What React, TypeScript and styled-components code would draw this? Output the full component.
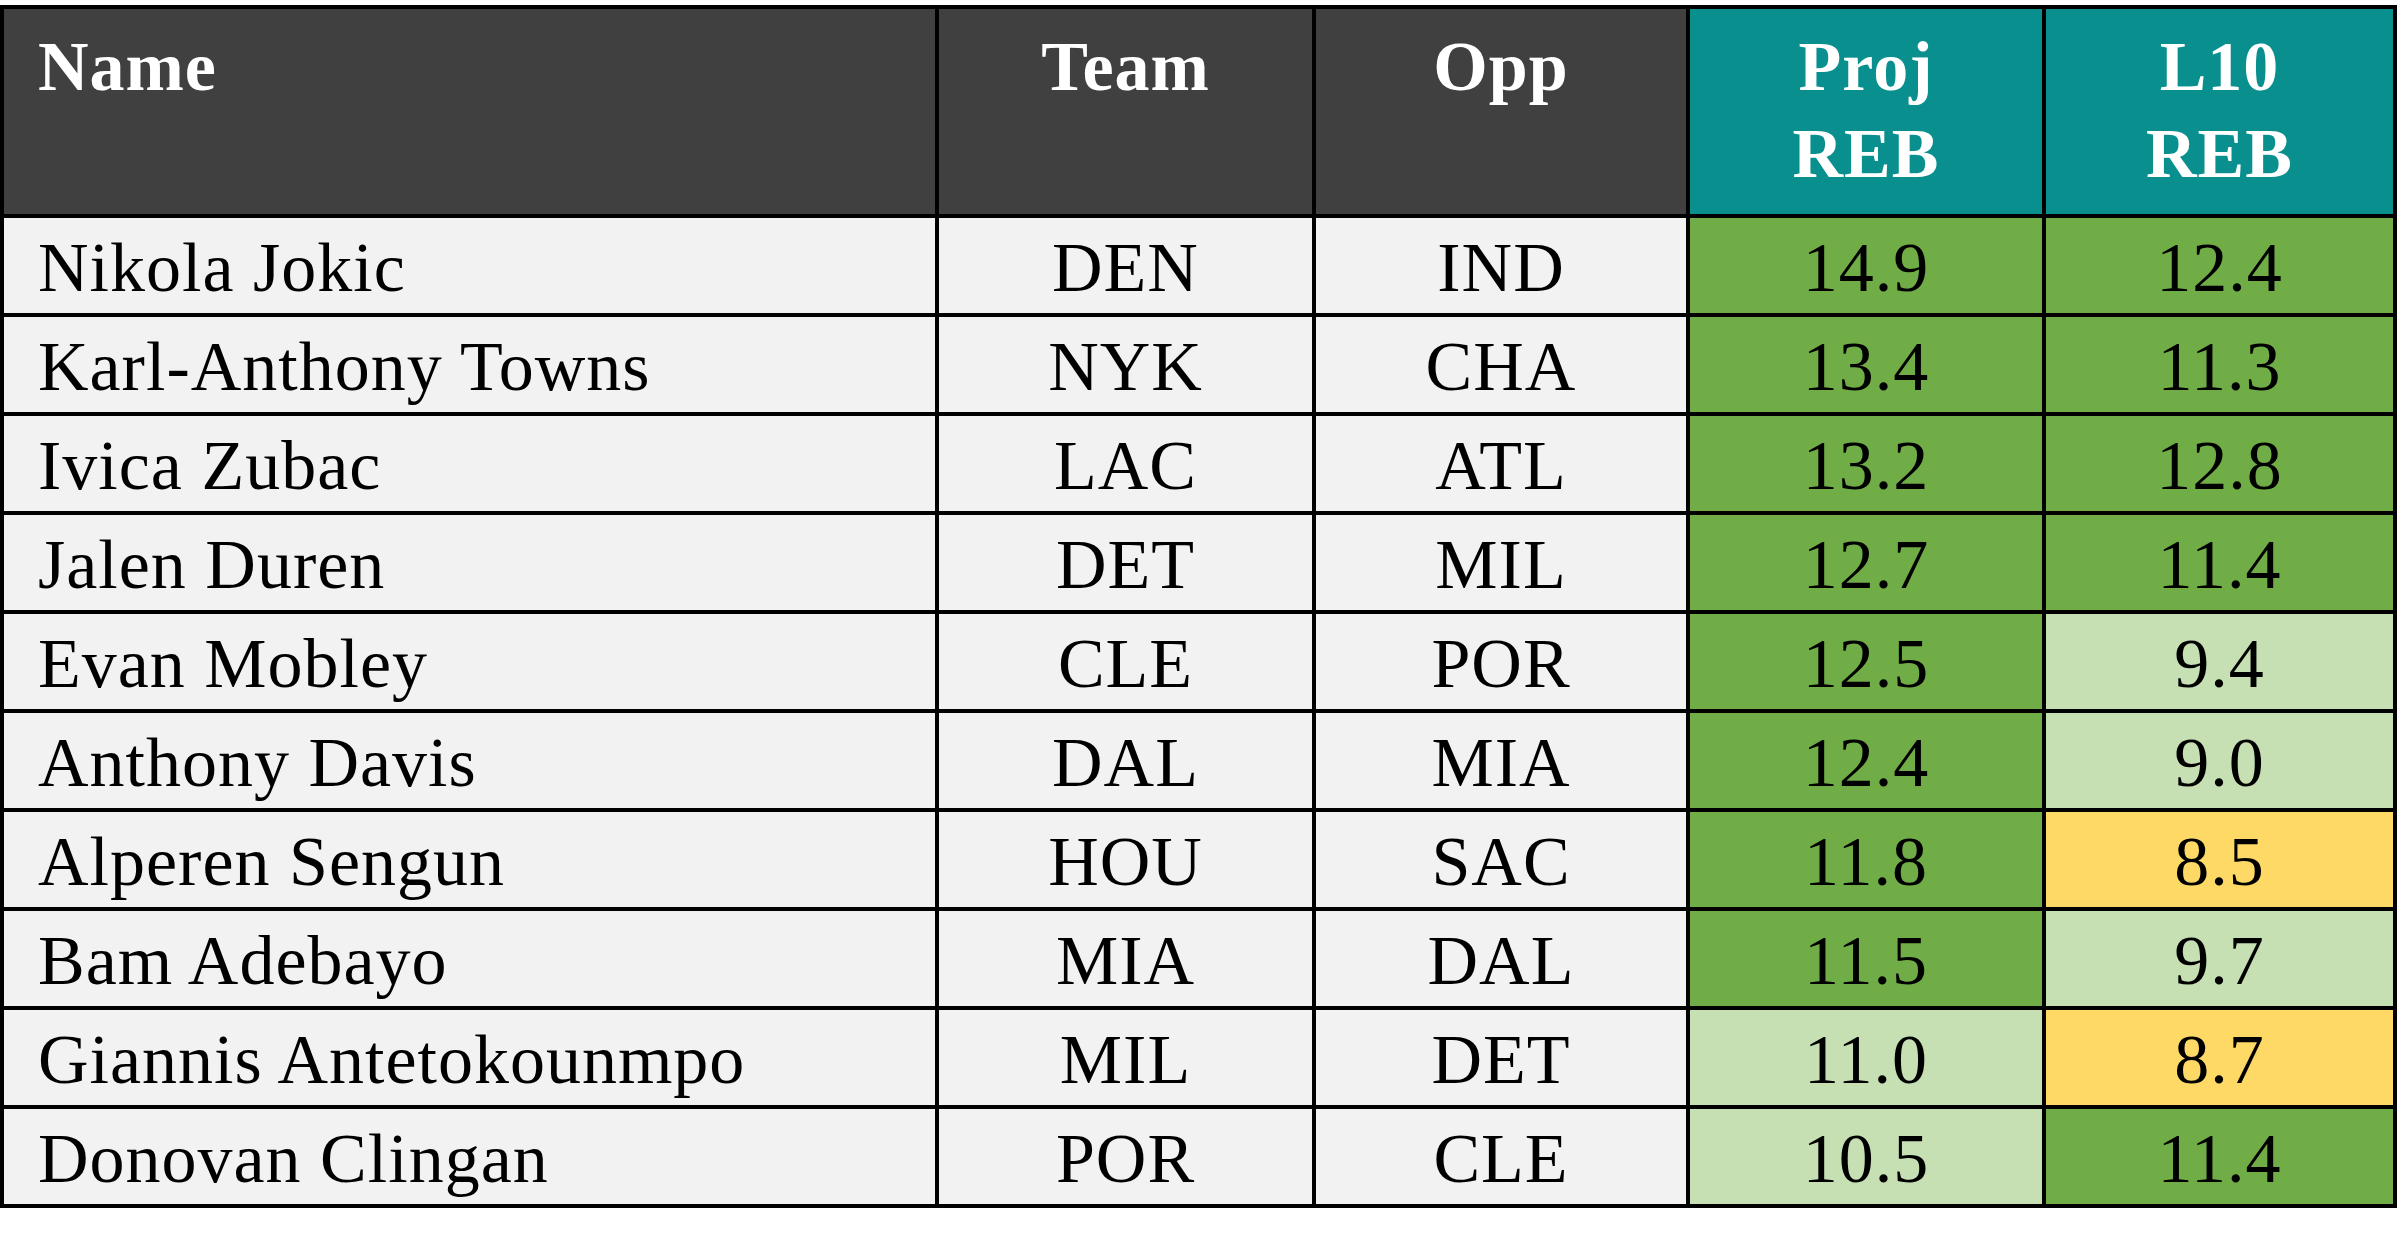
import React from 'react';
import styled, { createGlobalStyle, css } from 'styled-components';

const DARK = '#404040';
const TEAL = '#0a8f8f';
const STRONG = '#70ad47';
const SOFT = '#c6e0b4';
const WARN = '#ffd966';
const BODY_BG = '#f2f2f2';

const GlobalStyle = createGlobalStyle`
  html, body {
    margin: 0;
    padding: 0;
    background: #ffffff;
  }
  body {
    font-family: 'Liberation Serif', 'Times New Roman', serif;
  }
`;

const Page = styled.div`
  padding-top: 5px;
`;

const Grid = styled.div`
  display: grid;
  grid-template-columns: 931px 373px 370px 352px 347px;
  grid-template-rows: 205px repeat(10, 95px);
  gap: 4px;
  padding: 4px;
  width: fit-content;
  background: #000000;
`;

type Tone = 'dark' | 'teal';

const HeadCell = styled.div<{ $tone: Tone; $align?: 'left' | 'center' }>`
  background: ${({ $tone }) => ($tone === 'teal' ? TEAL : DARK)};
  color: #ffffff;
  font-weight: 700;
  font-size: 70px;
  letter-spacing: 1px;
  line-height: 87px;
  padding-top: 14px;
  text-align: ${({ $align }) => $align || 'center'};
  ${({ $align }) =>
    $align === 'left' &&
    css`
      padding-left: 34px;
    `}
`;

type Fill = 'plain' | 'strong' | 'soft' | 'warn';

const fills: Record<Fill, string> = {
  plain: BODY_BG,
  strong: STRONG,
  soft: SOFT,
  warn: WARN,
};

const Cell = styled.div<{ $fill?: Fill; $align?: 'left' | 'center' }>`
  background: ${({ $fill }) => fills[$fill || 'plain']};
  color: #000000;
  font-size: 70px;
  letter-spacing: 1px;
  line-height: 68px;
  padding-top: 16px;
  white-space: nowrap;
  text-align: ${({ $align }) => $align || 'center'};
  ${({ $align }) =>
    $align === 'left' &&
    css`
      padding-left: 34px;
    `}
`;

const players = [
  { name: 'Nikola Jokic', team: 'DEN', opp: 'IND', proj: 14.9, l10: 12.4 },
  { name: 'Karl-Anthony Towns', team: 'NYK', opp: 'CHA', proj: 13.4, l10: 11.3 },
  { name: 'Ivica Zubac', team: 'LAC', opp: 'ATL', proj: 13.2, l10: 12.8 },
  { name: 'Jalen Duren', team: 'DET', opp: 'MIL', proj: 12.7, l10: 11.4 },
  { name: 'Evan Mobley', team: 'CLE', opp: 'POR', proj: 12.5, l10: 9.4 },
  { name: 'Anthony Davis', team: 'DAL', opp: 'MIA', proj: 12.4, l10: 9.0 },
  { name: 'Alperen Sengun', team: 'HOU', opp: 'SAC', proj: 11.8, l10: 8.5 },
  { name: 'Bam Adebayo', team: 'MIA', opp: 'DAL', proj: 11.5, l10: 9.7 },
  { name: 'Giannis Antetokounmpo', team: 'MIL', opp: 'DET', proj: 11.0, l10: 8.7 },
  { name: 'Donovan Clingan', team: 'POR', opp: 'CLE', proj: 10.5, l10: 11.4 },
];

// same thresholds the sheet's conditional formatting lands on
const fillFor = (v: number): Fill => {
  if (v > 11) return 'strong';
  if (v >= 9) return 'soft';
  return 'warn';
};

const App = () => {
  return (
    <Page>
      <GlobalStyle />
      <Grid>
        <HeadCell $tone="dark" $align="left">
          Name
        </HeadCell>
        <HeadCell $tone="dark">Team</HeadCell>
        <HeadCell $tone="dark">Opp</HeadCell>
        <HeadCell $tone="teal">
          Proj
          <br />
          REB
        </HeadCell>
        <HeadCell $tone="teal">
          L10
          <br />
          REB
        </HeadCell>

        {players.map((p) => (
          <React.Fragment key={p.name}>
            <Cell $align="left">{p.name}</Cell>
            <Cell>{p.team}</Cell>
            <Cell>{p.opp}</Cell>
            <Cell $fill={fillFor(p.proj)}>{p.proj.toFixed(1)}</Cell>
            <Cell $fill={fillFor(p.l10)}>{p.l10.toFixed(1)}</Cell>
          </React.Fragment>
        ))}
      </Grid>
    </Page>
  );
};

export default App;
